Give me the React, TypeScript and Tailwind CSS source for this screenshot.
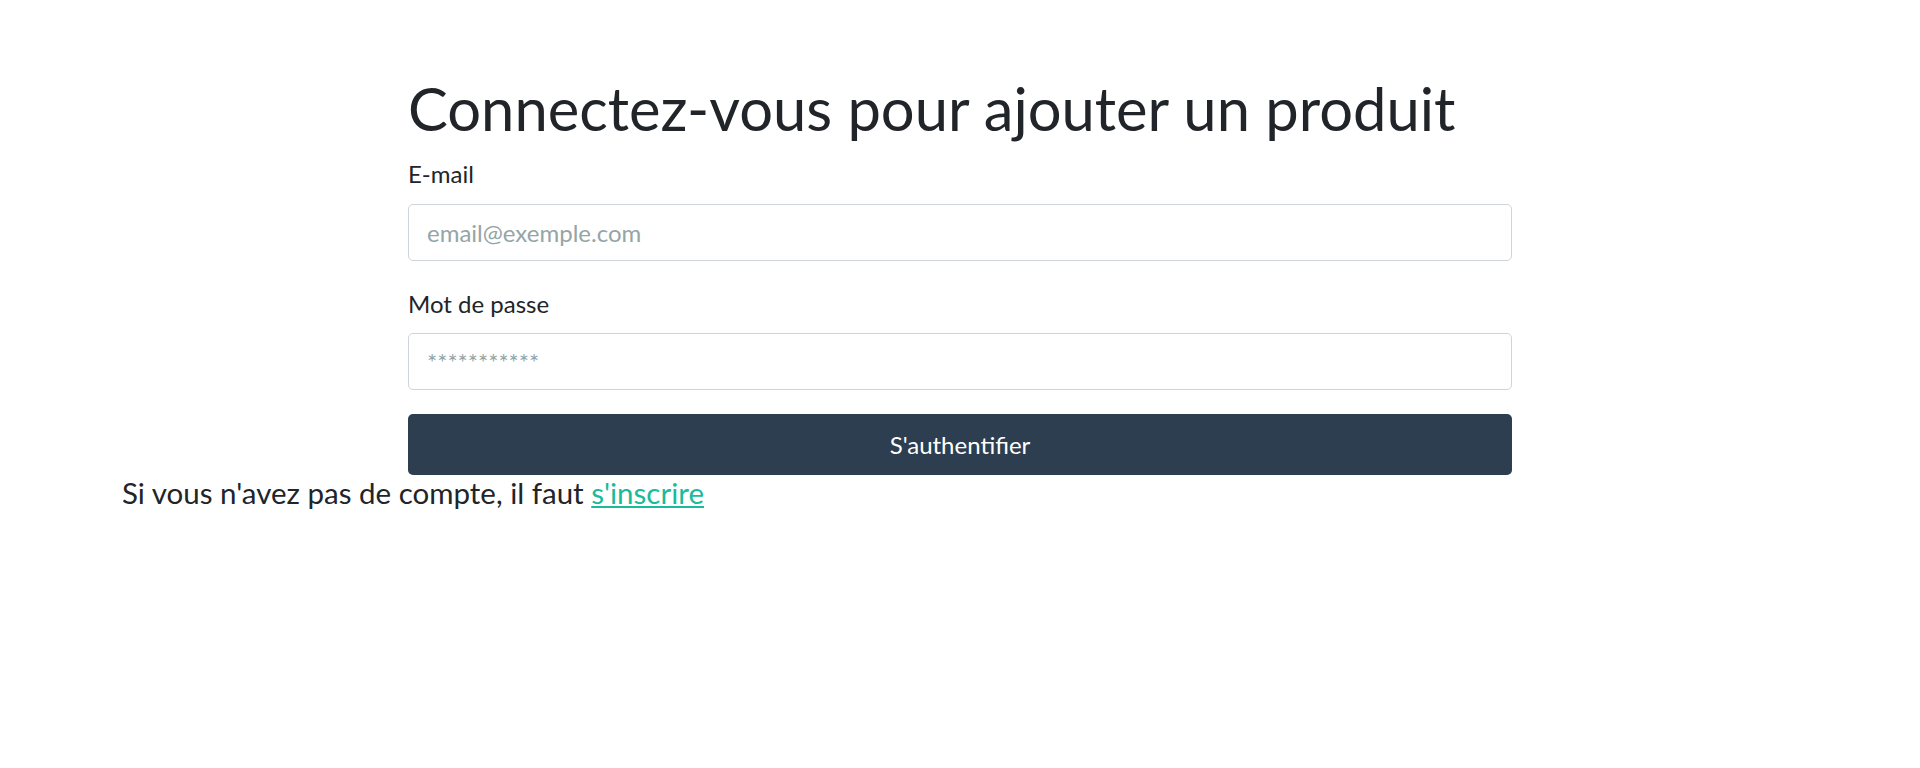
export default function App() {
  return (
    <div className="min-h-[768px] bg-white text-[#212529] font-['Lato','Noto_Sans',sans-serif]">
      <div className="pt-[72px]">
        <div className="w-[1104px] ml-[408px]">
          <h1 className="text-[59.7px] leading-[72px] font-normal m-0">Connectez-vous pour ajouter un produit</h1>
          <form className="mt-[12px]" onSubmit={(e) => e.preventDefault()}>
            <label className="block text-[24px] leading-[36px]">E-mail</label>
            <input
              type="email"
              placeholder="email@exemple.com"
              className="mt-[12px] block w-full h-[57px] px-[18px] text-[24px] border border-[#ced4da] rounded-[5px] outline-none placeholder:text-[#95a5a6] bg-white"
            />
            <label className="block mt-[25px] text-[24px] leading-[36px]">Mot de passe</label>
            <input
              type="password"
              placeholder="***********"
              className="mt-[11px] block w-full h-[57px] px-[18px] text-[24px] border border-[#ced4da] rounded-[5px] outline-none placeholder:text-[#95a5a6] bg-white"
            />
            <button
              type="submit"
              className="mt-[24px] block w-full h-[61px] bg-[#2c3e50] text-white text-[24px] rounded-[5px]"
            >
              S'authentifier
            </button>
          </form>
        </div>
        <p className="m-0 pl-[122px] text-[29.5px] leading-[36px]">
          Si vous n'avez pas de compte, il faut{" "}
          <a href="#" className="text-[#18bc9c] underline">s'inscrire</a>
        </p>
      </div>
    </div>
  );
}
